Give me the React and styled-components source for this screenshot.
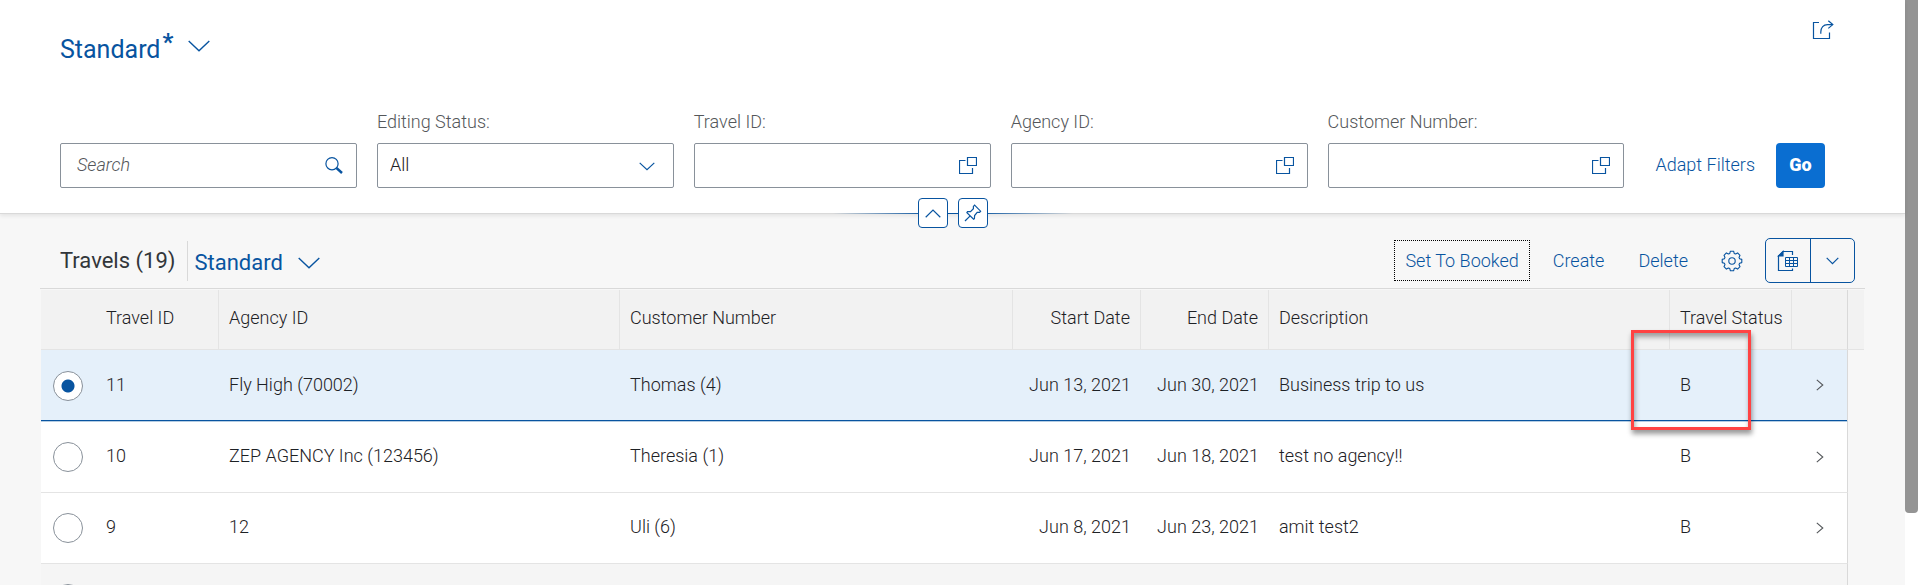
import React from "react";
import styled, { createGlobalStyle, css } from "styled-components";

const color = {
  link: "#0854a0",
  text: "#1d2125",
  label: "#54575a",
  border: "#89919a",
  line: "#d9d9d9",
  rule: "#e4e4e4",
  page: "#f7f7f7",
  head: "#f2f2f2",
  selected: "#e5f0fa",
  emphasis: "#0a6ed1",
};

const GlobalStyle = createGlobalStyle`
  *, *::before, *::after { box-sizing: border-box; }
  body { margin: 0; background: #fff; }
  button, input, select { font: inherit; color: inherit; margin: 0; }
  body {
    font-family: Roboto, "Liberation Sans", sans-serif;
    font-size: 18px;
    font-weight: 300;
    line-height: 24px;
    color: ${color.text};
  }
`;

const Shell = styled.div`
  display: flex;
  align-items: flex-start;
  height: 100vh;
  overflow: hidden;
`;

const Page = styled.main`
  flex: 1;
  min-width: 0;
  min-height: 100vh;
  background: ${color.page};
`;

const ScrollThumb = styled.div`
  width: 13px;
  height: calc(88vh - 2px);
  background: #949494;
  border-radius: 0 0 4px 4px;
`;

const Header = styled.header`
  position: relative;
  padding: 0 80px 25px 60px;
  background: #fff;
  border-bottom: 1px solid ${color.line};
  box-shadow: 0 2px 4px rgba(0, 0, 0, 0.08);
`;

const TitleBar = styled.div`
  display: flex;
  justify-content: space-between;
  align-items: flex-start;
  min-height: 110px;
  padding: 16px 0;
`;

const PlainButton = styled.button`
  display: inline-flex;
  align-items: center;
  justify-content: center;
  padding: 0;
  border: 0;
  background: transparent;
  color: ${color.link};
  cursor: pointer;
`;

const VariantButton = styled(PlainButton)`
  gap: 15px;
  font-size: ${(p) => (p.$large ? "25px" : "22px")};
  font-weight: 400;
  line-height: 32px;
`;

const TitleVariant = styled(VariantButton)`
  margin-top: 18px;
  align-items: flex-start;
  svg { margin-top: 6px; }
`;

const TableVariant = styled(VariantButton)`
  padding-top: 5px;
`;

const Modified = styled.sup`
  margin-left: 2px;
  font-size: 24px;
  font-weight: 700;
  line-height: 0;
  vertical-align: 8px;
`;

const ShareButton = styled(PlainButton)`
  width: 44px;
  height: 28px;
  margin-right: -20px;
`;

const FilterBar = styled.form`
  display: flex;
  align-items: flex-end;
  gap: 20px;
`;

const Field = styled.div`
  flex: 1;
  min-width: 0;
  display: flex;
  flex-direction: column;
  gap: 9px;
`;

const Label = styled.label`
  color: ${color.label};
`;

const Box = styled.div`
  position: relative;
  display: flex;
  align-items: center;
  height: 45px;
  border: 1px solid ${color.border};
  border-radius: 2px;
  background: #fff;
`;

const control = css`
  flex: 1;
  min-width: 0;
  height: 100%;
  padding: 0 12px 2px;
  border: 0;
  outline: 0;
  background: transparent;
`;

const TextInput = styled.input.attrs({ type: "text" })`
  ${control}
`;

const SearchInput = styled.input.attrs({ type: "search" })`
  ${control}
  padding: 0 16px 2px;
  &::placeholder { color: ${color.label}; font-style: italic; opacity: 1; }
`;

const Select = styled.select`
  ${control}
  appearance: none;
`;

const SelectArrow = styled.span`
  position: absolute;
  right: 18px;
  top: 2px;
  bottom: 0;
  display: flex;
  align-items: center;
  color: ${color.link};
  pointer-events: none;
`;

const FieldButton = styled(PlainButton)`
  width: 44px;
  height: 100%;
`;

const FilterActions = styled.div`
  display: flex;
  align-items: center;
  gap: 10px;
`;

const LinkButton = styled(PlainButton)`
  height: ${(p) => (p.$tall ? "45px" : "41px")};
  padding: 0 11px ${(p) => (p.$tall ? "2px" : "0")};
  white-space: nowrap;
  ${(p) => p.$focused && "outline: 1px dotted #000; outline-offset: -1px;"}
`;

const GoButton = styled.button`
  width: 49px;
  height: 45px;
  padding: 0 0 2px;
  border: 0;
  border-radius: 4px;
  background: ${color.emphasis};
  color: #fff;
  font-weight: 900;
  cursor: pointer;
`;

const HeaderHandle = styled.div`
  position: absolute;
  left: 50%;
  bottom: -15px;
  width: 240px;
  margin-left: -120px;
  display: flex;
  justify-content: center;
  gap: 10px;
  background: linear-gradient(90deg, transparent, ${color.link} 40%, ${color.link} 60%, transparent)
    center / 100% 1px no-repeat;
`;

const HandleButton = styled(PlainButton)`
  width: 30px;
  height: 30px;
  border: 1px solid ${color.link};
  border-radius: 4px;
  background: #fff;
`;

const TableArea = styled.section`
  padding: 24px 40px 0;
`;

const Toolbar = styled.div`
  display: flex;
  align-items: center;
  height: 51px;
  padding: 0 10px 5px 20px;
  border-bottom: 1px solid ${color.line};
`;

const TableTitle = styled.h2`
  margin: 0;
  padding-right: 12px;
  font-size: 22px;
  font-weight: 400;
  line-height: 28px;
  color: #32363a;
`;

const Divider = styled.span`
  width: 1px;
  height: 40px;
  margin-right: 6px;
  background: ${color.line};
`;

const ToolbarActions = styled.div`
  margin-left: auto;
  display: flex;
  align-items: center;
  gap: 12px;
`;

const IconButton = styled(PlainButton)`
  width: 42px;
  height: 45px;
`;

const SplitButton = styled.div`
  display: flex;
  height: 45px;
  border: 1px solid ${color.link};
  border-radius: 5px;
  overflow: hidden;

  button + button { border-left: 1px solid ${color.link}; }
`;

const SplitPart = styled(PlainButton)`
  width: 44px;
`;

const Table = styled.table`
  width: 100%;
  margin-top: 1px;
  padding: 0 1px;
  table-layout: fixed;
  border-collapse: separate;
  border-spacing: 0;
`;

const Th = styled.th`
  height: 60px;
  padding: 0 10px 4px;
  background: ${color.head};
  border-bottom: 1px solid ${color.rule};
  border-right: ${(p) => (p.$divided ? `1px solid ${p.$edge ? color.line : color.rule}` : "0")};
  font-weight: 300;
  text-align: ${(p) => (p.$end ? "right" : "left")};
  white-space: nowrap;
`;

const Td = styled.td`
  position: relative;
  height: 71px;
  padding: 0 10px 2px;
  text-align: ${(p) => (p.$end ? "right" : "left")};
  white-space: nowrap;
  ${(p) => p.$center && "padding: 0; text-align: center;"}
`;

const EdgeTd = styled(Td)`
  && { background: transparent; border: 0; border-left: 0; }
`;

const Row = styled.tr`
  td {
    background: ${(p) => (p.$selected ? color.selected : p.$idle ? "#f5f5f5" : "#fff")};
    border-bottom: 1px solid ${color.rule};
    ${(p) =>
      p.$selected &&
      css`
        height: 72px;
        border-bottom: 1px solid #b5cde3;
        box-shadow: inset 0 -1px ${color.link};
      `}
  }
  td:nth-last-child(2) { border-right: 1px solid ${color.line}; }
  td:last-child { box-shadow: none; }
`;

const Radio = styled.input.attrs({ type: "radio" })`
  appearance: none;
  display: block;
  width: 30px;
  height: 30px;
  margin: 0 0 0 12px;
  border: 1px solid ${color.border};
  border-radius: 50%;
  background: #fff;
  &:checked { background: radial-gradient(circle, ${color.link} 6px, #fff 7px); }
`;

const Highlight = styled.span`
  position: absolute;
  left: -39px;
  top: -20px;
  width: 120px;
  height: 100px;
  border: 3px solid #ff4343;
  box-shadow: 1px 4px 5px rgba(0, 0, 0, 0.4), inset 1px 4px 5px rgba(0, 0, 0, 0.35);
  pointer-events: none;
  z-index: 1;
`;

const Svg = ({ w, h, children, stroke = 1.2 }) => (
  <svg
    width={w}
    height={h}
    viewBox={`0 0 ${w} ${h}`}
    fill="none"
    stroke="currentColor"
    strokeWidth={stroke}
    aria-hidden="true"
  >
    {children}
  </svg>
);

const ChevronDown = ({ size = 22 }) => {
  const h = Math.round(size / 2) + 1;
  return (
    <Svg w={size} h={h} stroke={size > 18 ? 1.4 : 1.2}>
      <path d={`M.7 .9L${size / 2} ${h - 1.3}L${size - 0.7} .9`} />
    </Svg>
  );
};

const ChevronUp = () => (
  <Svg w={16} h={9}>
    <path d="M.7 8.2L8 1L15.3 8.2" />
  </Svg>
);

const SearchIcon = () => (
  <Svg w={18} h={17}>
    <circle cx="7" cy="6.7" r="6.1" />
    <path d="M11.5 11L17 16" strokeWidth="2.4" />
  </Svg>
);

const ValueHelpIcon = () => (
  <Svg w={18} h={18}>
    <path d="M8.5 .5H17.5V8.5H8.5Z" />
    <path d="M6.5 3.5H.5V16.5H13.5V11" />
  </Svg>
);

const ShareIcon = () => (
  <Svg w={22} h={20}>
    <path d="M7 2.5H1.5V18.5H17.5V12.5" />
    <path d="M8.8 13.8V12C8.8 7.5 11.5 4.6 15.5 4.6H20.5" />
    <path d="M16.3 .8L20.8 4.6L16.3 8.4" />
  </Svg>
);

const PinIcon = () => (
  <Svg w={18} h={18}>
    <path d="M10.6 1.2L16.6 7.2L15.6 8.3L13.2 8.4L10.6 11.6L10.4 14.7L9.6 15.2L2.9 8.6L3.5 7.7L6.5 7.6L9.4 4.7L9.4 2.4Z" />
    <path d="M6.2 11.8L1 17" />
  </Svg>
);

const GearIcon = () => (
  <Svg w={22} h={22} stroke={1.1}>
    <path
      strokeLinejoin="round"
      d="M9.4 1.2H12.6L13.2 3.4L14.6 4L16.6 2.9L19 5.3L18 7.4L18.6 8.8L20.8 9.4V12.6L18.6 13.2L18 14.6L19 16.7L16.6 19.1L14.6 18L13.2 18.6L12.6 20.8H9.4L8.8 18.6L7.4 18L5.4 19.1L3 16.7L4 14.6L3.4 13.2L1.2 12.6V9.4L3.4 8.8L4 7.4L3 5.3L5.4 2.9L7.4 4L8.8 3.4Z"
    />
    <circle cx="11" cy="11" r="3.2" />
  </Svg>
);

const ExportIcon = () => (
  <Svg w={22} h={22}>
    <path d="M15.5 5V1.5H6L1.5 6V20.5H15.5V18.5" />
    <path d="M6 1.5V6H1.5Z" fill="currentColor" />
    <path
      strokeWidth="1"
      d="M8.5 7.5H20.5V16.5H8.5ZM8.5 10.5H20.5M8.5 13.5H20.5M12.5 7.5V16.5M16.5 7.5V16.5"
    />
  </Svg>
);

const ChevronRight = () => (
  <Svg w={8} h={12} stroke={1.1}>
    <path d="M.8 .8L6.8 6L.8 11.2" />
  </Svg>
);

const NavButton = styled(PlainButton)`
  width: 24px;
  height: 24px;
  padding-bottom: 2px;
  vertical-align: middle;
  color: ${color.label};
`;

const valueHelpFields = [
  { id: "travel", label: "Travel ID:" },
  { id: "agency", label: "Agency ID:" },
  { id: "customer", label: "Customer Number:" },
];

const rows = [
  { id: "11", agency: "Fly High (70002)", customer: "Thomas (4)", start: "Jun 13, 2021", end: "Jun 30, 2021", text: "Business trip to us", status: "B" },
  { id: "10", agency: "ZEP AGENCY Inc (123456)", customer: "Theresia (1)", start: "Jun 17, 2021", end: "Jun 18, 2021", text: "test no agency!!", status: "B" },
  { id: "9", agency: "12", customer: "Uli (6)", start: "Jun 8, 2021", end: "Jun 23, 2021", text: "amit test2", status: "B" },
];

export default function App() {
  return (
    <>
      <GlobalStyle />
      <Shell>
        <Page>
          <Header>
            <TitleBar>
              <TitleVariant type="button" $large>
                <span>
                  Standard<Modified>*</Modified>
                </span>
                <ChevronDown />
              </TitleVariant>
              <ShareButton type="button" aria-label="Share">
                <ShareIcon />
              </ShareButton>
            </TitleBar>
            <FilterBar onSubmit={(e) => e.preventDefault()}>
              <Field>
                <Box>
                  <SearchInput placeholder="Search" aria-label="Search" />
                  <FieldButton type="button" aria-label="Run search">
                    <SearchIcon />
                  </FieldButton>
                </Box>
              </Field>
              <Field>
                <Label htmlFor="editing">Editing Status:</Label>
                <Box>
                  <Select id="editing" defaultValue="All">
                    <option>All</option>
                  </Select>
                  <SelectArrow>
                    <ChevronDown size={16} />
                  </SelectArrow>
                </Box>
              </Field>
              {valueHelpFields.map((f) => (
                <Field key={f.id}>
                  <Label htmlFor={f.id}>{f.label}</Label>
                  <Box>
                    <TextInput id={f.id} />
                    <FieldButton type="button" aria-label="Value help">
                      <ValueHelpIcon />
                    </FieldButton>
                  </Box>
                </Field>
              ))}
              <FilterActions>
                <LinkButton type="button" $tall>
                  Adapt Filters
                </LinkButton>
                <GoButton type="submit">Go</GoButton>
              </FilterActions>
            </FilterBar>
            <HeaderHandle>
              <HandleButton type="button" aria-label="Collapse header">
                <ChevronUp />
              </HandleButton>
              <HandleButton type="button" aria-label="Pin header">
                <PinIcon />
              </HandleButton>
            </HeaderHandle>
          </Header>

          <TableArea>
            <Toolbar>
              <TableTitle>Travels (19)</TableTitle>
              <Divider />
              <TableVariant type="button">
                Standard
                <ChevronDown />
              </TableVariant>
              <ToolbarActions>
                <LinkButton type="button" $focused>
                  Set To Booked
                </LinkButton>
                <LinkButton type="button">Create</LinkButton>
                <LinkButton type="button">Delete</LinkButton>
                <IconButton type="button" aria-label="Settings">
                  <GearIcon />
                </IconButton>
                <SplitButton>
                  <SplitPart type="button" aria-label="Export">
                    <ExportIcon />
                  </SplitPart>
                  <SplitPart type="button" aria-label="Export options">
                    <ChevronDown size={13} />
                  </SplitPart>
                </SplitButton>
              </ToolbarActions>
            </Toolbar>

            <Table>
              <colgroup>
                <col style={{ width: 55 }} />
                <col style={{ width: 123 }} />
                <col style={{ width: "22%" }} />
                <col />
                <col style={{ width: 128 }} />
                <col style={{ width: 128 }} />
                <col style={{ width: "22%" }} />
                <col style={{ width: 122 }} />
                <col style={{ width: 56 }} />
                <col style={{ width: 16 }} />
              </colgroup>
              <thead>
                <tr>
                  <Th />
                  <Th $divided>Travel ID</Th>
                  <Th $divided>Agency ID</Th>
                  <Th $divided>Customer Number</Th>
                  <Th $divided $end>Start Date</Th>
                  <Th $divided $end>End Date</Th>
                  <Th $divided>Description</Th>
                  <Th $divided>Travel Status</Th>
                  <Th $divided $edge />
                  <Th />
                </tr>
              </thead>
              <tbody>
                {rows.map((r, i) => (
                  <Row key={r.id} $selected={i === 0}>
                    <Td $center>
                      <Radio name="travel-row" aria-label={`Select travel ${r.id}`} defaultChecked={i === 0} />
                    </Td>
                    <Td>{r.id}</Td>
                    <Td>{r.agency}</Td>
                    <Td>{r.customer}</Td>
                    <Td $end>{r.start}</Td>
                    <Td $end>{r.end}</Td>
                    <Td>{r.text}</Td>
                    <Td>
                      {r.status}
                      {i === 0 && <Highlight />}
                    </Td>
                    <Td $center>
                      <NavButton type="button" aria-label={`Open travel ${r.id}`}>
                        <ChevronRight />
                      </NavButton>
                    </Td>
                    <EdgeTd />
                  </Row>
                ))}
                <Row $idle>
                  <Td $center>
                    <Radio name="travel-row" aria-label="Select travel" />
                  </Td>
                  <Td colSpan={8} />
                  <EdgeTd />
                </Row>
              </tbody>
            </Table>
          </TableArea>
        </Page>
        <ScrollThumb />
      </Shell>
    </>
  );
}
